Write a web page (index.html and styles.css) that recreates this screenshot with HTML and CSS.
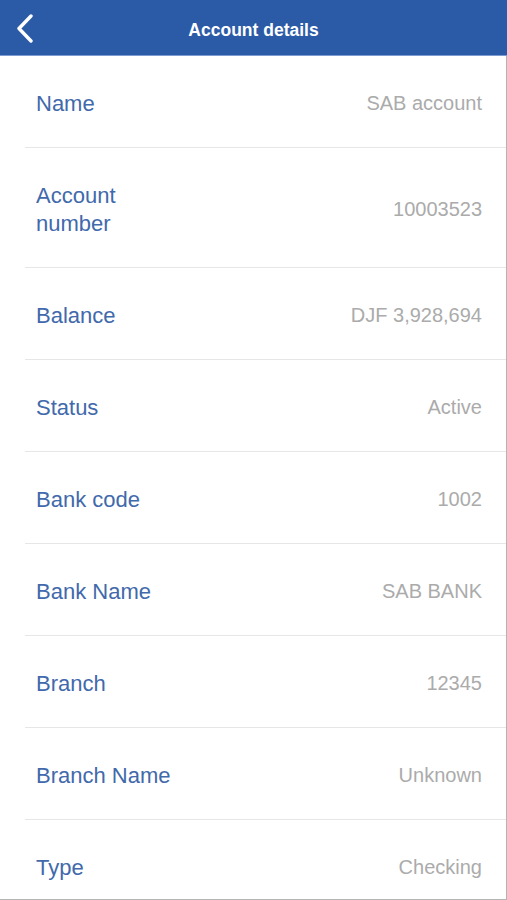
FILE: index.html
```html
<!DOCTYPE html>
<html lang="en">
<head>
    <meta charset="UTF-8">
    <meta name="viewport" content="width=device-width, initial-scale=1.0">
    <title>Account details</title>
    <link rel="stylesheet" href="styles.css">
</head>
<body>

<div class="header">
    <button class="back" aria-label="Back">
        <svg width="20" height="30" viewBox="0 0 20 30">
            <path d="M15 2 L3 14.5 L15 27" fill="none" stroke="#fff" stroke-width="3.4" stroke-linecap="round" stroke-linejoin="round"/>
        </svg>
    </button>
    <h1>Account details</h1>
</div>

<div class="details">
    <div class="row">
        <span class="label">Name</span>
        <span class="value">SAB account</span>
    </div>
    <div class="row row-tall">
        <span class="label label-wrap">Account number</span>
        <span class="value">10003523</span>
    </div>
    <div class="row">
        <span class="label">Balance</span>
        <span class="value">DJF 3,928,694</span>
    </div>
    <div class="row">
        <span class="label">Status</span>
        <span class="value">Active</span>
    </div>
    <div class="row">
        <span class="label">Bank code</span>
        <span class="value">1002</span>
    </div>
    <div class="row">
        <span class="label">Bank Name</span>
        <span class="value">SAB BANK</span>
    </div>
    <div class="row">
        <span class="label">Branch</span>
        <span class="value">12345</span>
    </div>
    <div class="row">
        <span class="label">Branch Name</span>
        <span class="value">Unknown</span>
    </div>
    <div class="row">
        <span class="label">Type</span>
        <span class="value">Checking</span>
    </div>
</div>

</body>
</html>
```

FILE: styles.css
```css
body {
    font-family: 'Liberation Sans', Arial, sans-serif;
    margin: 0;
    padding: 0;
    background-color: #fff;
    height: 900px;
    display: flex;
    flex-direction: column;
    overflow: hidden;
}
.header {
    position: relative;
    height: 55px;
    background-color: #2b5ba7;
    border-bottom: 1px solid #7d9bd0;
    display: flex;
    align-items: center;
    justify-content: center;
    flex-shrink: 0;
}
.header h1 {
    margin: 0;
    color: #fff;
    font-size: 17.5px;
    font-weight: bold;
    margin-top: 5px;
}
.back {
    position: absolute;
    left: 16px;
    top: 14px;
    padding: 0;
    border: none;
    background: none;
    display: flex;
}
.details {
    flex: 1;
    border-right: 1px solid #b4b4b4;
    border-bottom: 1px solid #b4b4b4;
    overflow: hidden;
}
.row {
    box-sizing: border-box;
    display: flex;
    align-items: center;
    justify-content: space-between;
    min-height: 92px;
    margin-left: 25px;
    padding: 4px 24px 0 11px;
    border-bottom: 1px solid #e6e6e6;
}
.row-tall {
    min-height: 120px;
}
.label {
    color: #4169ab;
    font-size: 22px;
    line-height: 28px;
}
.label-wrap {
    width: 100px;
}
.value {
    color: #ababab;
    font-size: 20px;
}
```
